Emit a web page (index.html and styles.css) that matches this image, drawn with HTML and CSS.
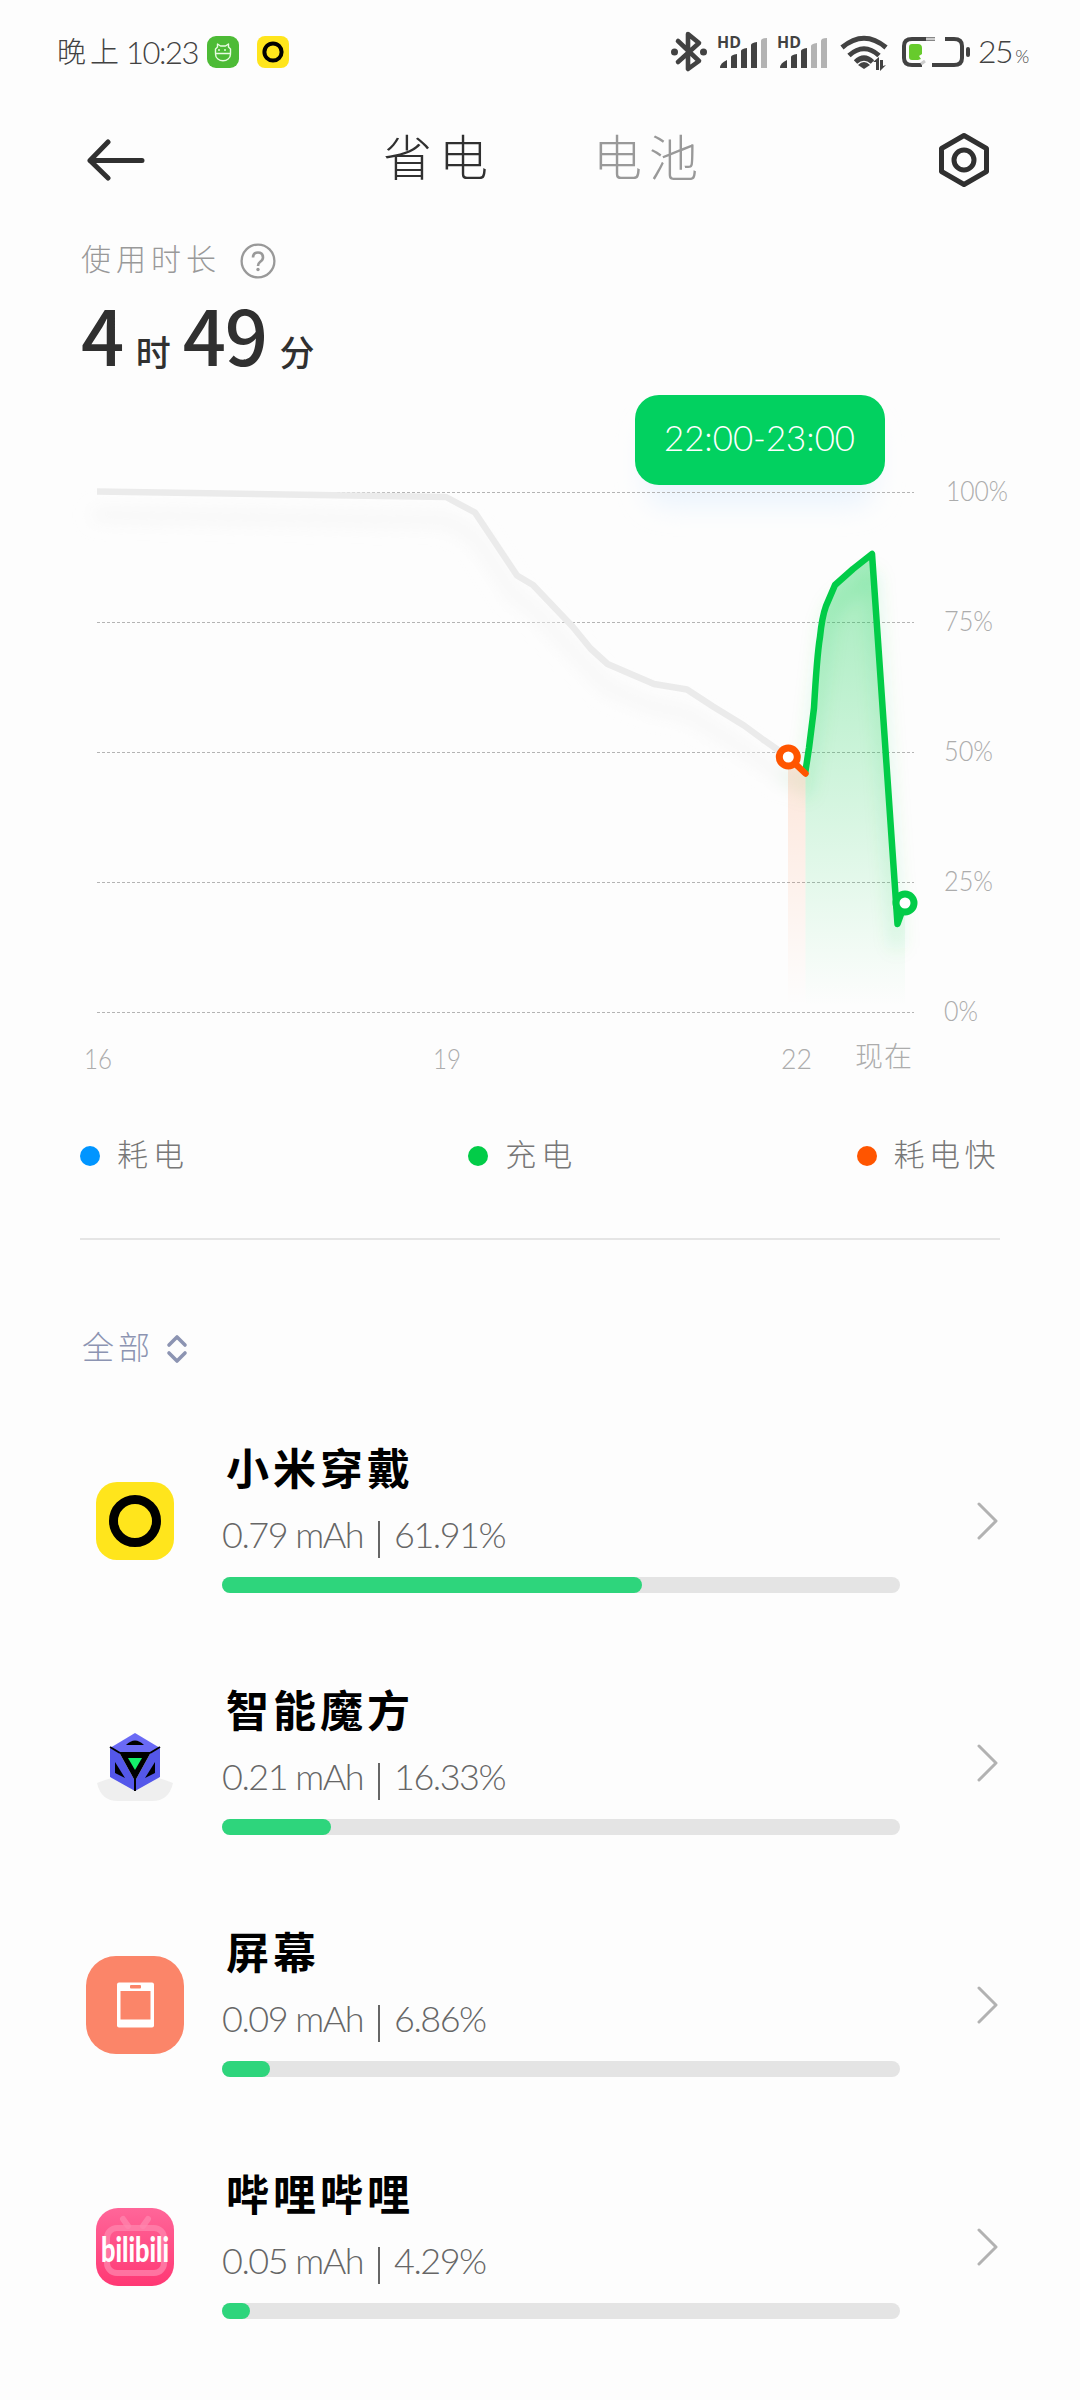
FILE: index.html
```html
<!DOCTYPE html>
<html lang="zh-CN">
<head>
<meta charset="utf-8">
<title>省电</title>
<link rel="stylesheet" href="styles.css">
</head>
<body>
<header class="status">
  <span class="clock"><span class="clock-day">晚上</span><span class="clock-time">10:23</span></span>
  <svg class="status-app" viewBox="0 0 32 32" width="32" height="32">
    <rect width="32" height="32" rx="9" fill="#4dbb36"/>
    <g fill="none" stroke="#e9fbe3" stroke-width="1.4" stroke-linejoin="round"><path d="M8.500 17.500V13l2-2V8l3 2h5l3-2v3l2 2v4.500zM8.500 18c0 9 15 9 15 0"/><path d="M12 13v2M18 13v2"/></g>
  </svg>
  <svg class="status-app" viewBox="0 0 32 32" width="32" height="32">
    <rect width="32" height="32" rx="8" fill="#ffe51c"/><circle cx="16" cy="16" r="8.600" fill="none" stroke="#000" stroke-width="4"/>
  </svg>
  <svg class="status-icons" viewBox="668 28 304 48" width="304" height="48">
    <g fill="none" stroke="#424242" stroke-width="4.600" stroke-linejoin="round" stroke-linecap="round">
      <path d="M678 41L699 61L688 69V34L699 43L678 62"/>
    </g>
    <circle cx="674.500" cy="52" r="3.500" fill="#424242"/><circle cx="703.500" cy="52" r="3.500" fill="#424242"/>
    <g fill="#424242">
      <text class="hd" x="717" y="48" textLength="24" lengthAdjust="spacingAndGlyphs">HD</text>
      <path d="M720 68q0-5 7-8v8zM731 68v-11q0-2 6-3v14zM741 68V51q0-2 6-3v20zM751 68V45q0-2 6-3v26z"/>
      <text class="hd" x="777" y="48" textLength="24" lengthAdjust="spacingAndGlyphs">HD</text>
      <path d="M780 68q0-5 7-8v8zM791 68v-11q0-2 6-3v14zM801 68V51q0-2 6-3v20z"/>
    </g>
    <path fill="#b3b3b3" d="M761 68V41q0-3 6-3v30zM811 68V46q0-2 6-3v25zM821 68V41q0-3 6-3v30z"/>
    <g fill="none" stroke="#424242" stroke-width="5">
      <path d="M842 47.500Q864 29 886 47.500M849 55.500Q864 42 879 55.500M855.500 62Q864 54 872.500 62"/>
    </g>
    <path fill="#424242" d="M858 65q6-6 12 0l-6 4zM873 62l6-5v13h-3v-8zM880 60h3v6l3-1-6 6z"/>
    <path fill="none" stroke="#424242" stroke-width="4" d="M935 39H912Q904 39 904 46V58Q904 65 912 65H922M945 39H954Q962 39 962 46V58Q962 65 954 65H932"/>
    <path stroke="#ccc" stroke-width="3" d="M926 39h9M921 64l4-3"/>
    <path fill="#67cb2c" d="M912 44h6q4 0 4 4v6l-3 2 2 3-3 1h-6q-3 0-3-3V47q0-3 3-3z"/>
    <rect x="966" y="47" width="4" height="10" rx="2" fill="#424242"/>
  </svg>
  <span class="battery">25<small>%</small></span>
</header>

<nav class="bar">
  <svg viewBox="0 0 58 42" width="58" height="42"><path fill="none" stroke="#303030" stroke-width="5" stroke-linecap="round" stroke-linejoin="round" d="M21 3L3 21.500L21 39M3 21.500H55"/></svg>
  <div class="tabs"><span class="tab tab-on">省电</span><span class="tab">电池</span></div>
  <svg class="gear" viewBox="0 0 52 56" width="52" height="56"><g fill="none" stroke="#303030" stroke-width="5" stroke-linejoin="round"><path d="M26 3.500L48.500 16.500V39.500L26 52.500L3.500 39.500V16.500z"/><circle cx="26" cy="28" r="10"/></g></svg>
</nav>

<section class="usage">
  <div class="usage-head"><span>使用时长</span>
    <svg viewBox="0 0 36 36" width="36" height="36"><g fill="none" stroke="#999" stroke-width="2.300"><circle cx="18" cy="18" r="16.400"/><path stroke-width="2.600" d="M13 14.500q0-5 5-5t5 5q0 2.500-3 4.500q-2 1.500-2 4"/></g><circle cx="18" cy="26.500" r="1.700" fill="#999"/></svg>
  </div>
  <div class="usage-time"><b>4</b><i>时</i><b>49</b><i>分</i></div>
</section>

<svg class="chart" viewBox="0 380 1080 720" width="1080" height="720">
  <defs>
    <linearGradient id="gf" gradientUnits="userSpaceOnUse" x1="0" y1="554" x2="0" y2="1006"><stop offset="0" stop-color="#02cc48" stop-opacity=".36"/><stop offset="1" stop-color="#02cc48" stop-opacity="0"/></linearGradient>
    <linearGradient id="of" gradientUnits="userSpaceOnUse" x1="0" y1="757" x2="0" y2="1006"><stop offset="0" stop-color="#ff5500" stop-opacity=".14"/><stop offset="1" stop-color="#ff5500" stop-opacity="0"/></linearGradient>
    <filter id="soft" x="-20%" y="-20%" width="140%" height="160%"><feGaussianBlur stdDeviation="9"/></filter>
    <filter id="tip" x="-20%" y="-20%" width="140%" height="170%"><feGaussianBlur stdDeviation="13"/></filter>
  </defs>
  <rect x="645" y="420" width="230" height="86" rx="24" fill="#ebf4fd" filter="url(#tip)"/>
  <g stroke="#b4b4b4" stroke-width="1" stroke-dasharray="3 2"><path d="M97 492.500H914M97 622.500H914M97 752.500H914M97 882.500H914M97 1012.500H914"/></g>
  <g fill="none" stroke-linejoin="round" stroke-linecap="round" filter="url(#soft)" stroke-width="10">
    <path stroke="#f4f4f4" d="M97 515L446 520L475 536L517 599L533 608L572 650L607 687L654 707L687 713L744 749L788 780"/>
    <path stroke="#02cc48" stroke-opacity=".16" d="M788 773L805 792L814 728L826 626L835 605L872 576L897 944"/>
  </g>
  <path fill="url(#of)" d="M788 757L805.500 773V1008H788z"/>
  <path fill="url(#gf)" d="M805.500 772L809 748L814 708L820 637L826 606L835 585L853 569L872 554L897.500 924L905 903V1008H805.500z"/>
  <g fill="none" stroke-linejoin="round" stroke-width="6.500">
    <path stroke="#ebebeb" d="M97 491.500L446 497L475 512.500L517 575.500L533 585L572.500 626.500L590.500 648.500L607.500 664L654 684L687 689.500L713 706.500L744 725.500L763 739.500L788 757"/>
    <path stroke="#02cc48" stroke-linecap="round" d="M805.500 771L809 748L814 708Q817 655 820 637Q822 617 826 606L835 585L853 569L872 554L897.500 924L905 903"/>
    <path stroke="#ff5500" stroke-linecap="round" d="M788 757L805.500 773.500"/>
  </g>
  <circle cx="788.300" cy="757" r="9" fill="#fff" stroke="#ff5500" stroke-width="7"/>
  <circle cx="905" cy="903" r="9" fill="#fff" stroke="#02cc48" stroke-width="7"/>
  <rect x="635" y="395" width="250" height="90" rx="24" fill="#02d160"/>
  <text class="tip" x="664" y="451" textLength="191" lengthAdjust="spacingAndGlyphs">22:00-23:00</text>
  <g class="axis">
    <text x="946" y="501" textLength="62" lengthAdjust="spacingAndGlyphs">100%</text>
    <text x="944" y="631" textLength="49" lengthAdjust="spacingAndGlyphs">75%</text>
    <text x="944" y="761" textLength="49" lengthAdjust="spacingAndGlyphs">50%</text>
    <text x="944" y="891" textLength="49" lengthAdjust="spacingAndGlyphs">25%</text>
    <text x="944" y="1021" textLength="34" lengthAdjust="spacingAndGlyphs">0%</text>
    <text x="84" y="1069" textLength="28" lengthAdjust="spacingAndGlyphs">16</text>
    <text x="433" y="1069" textLength="28" lengthAdjust="spacingAndGlyphs">19</text>
    <text x="781" y="1069" textLength="31" lengthAdjust="spacingAndGlyphs">22</text>
    <text x="855" y="1067" textLength="57">现在</text>
  </g>
</svg>

<div class="legend">
  <span class="key"><span class="dot dot-blue"></span><span class="key-name">耗电</span></span>
  <span class="key"><span class="dot dot-green"></span><span class="key-name">充电</span></span>
  <span class="key"><span class="dot dot-orange"></span><span class="key-name">耗电快</span></span>
</div>

<div class="filter"><span>全部</span><svg viewBox="0 0 22 30" width="22" height="30"><path fill="none" stroke="#8c94b2" stroke-width="3.600" stroke-linecap="round" stroke-linejoin="round" d="M3 11L11 3L19 11M3 19L11 27L19 19"/></svg></div>

<main class="list">
  <article class="item">
    <svg class="icon" viewBox="0 0 98 98"><rect x="10" y="10" width="78" height="78" rx="21" fill="#ffe51c"/><circle cx="49" cy="49" r="21.500" fill="none" stroke="#000" stroke-width="9"/></svg>
    <div class="info"><h2>小米穿戴</h2><p><span>0.79 mAh</span><em></em><span>61.91%</span></p><div class="track"><div class="fill" style="width:62%"></div></div></div>
    <svg class="chev" viewBox="0 0 22 38"><path d="M2 2L19 19L2 36"/></svg>
  </article>
  <article class="item">
    <svg class="icon" viewBox="0 0 98 98">
      <path fill="#efefef" d="M11 69Q30 61 49 61T87 69Q83 87 66 87H32Q15 87 11 69z"/>
      <path fill="#6a6af5" d="M49 19L74 34L65 38H33L24 34z"/>
      <path fill="#5457ea" d="M24 34L33 38L49 67V77L24 63zM74 34L65 38L49 67V77L74 63z"/>
      <path fill="#000" d="M33 38H65L49 67zM40 31Q49 22 58 31zM29 48L39 64L29 59zM69 48L59 64L69 59z"/>
      <path stroke="#000" stroke-width="2" d="M24 33L34 39M74 33L64 39M49 64V77"/>
      <path fill="#14f06b" d="M42 44H56L49 56z"/>
    </svg>
    <div class="info"><h2>智能魔方</h2><p><span>0.21 mAh</span><em></em><span>16.33%</span></p><div class="track"><div class="fill" style="width:16.1%"></div></div></div>
    <svg class="chev" viewBox="0 0 22 38"><path d="M2 2L19 19L2 36"/></svg>
  </article>
  <article class="item">
    <svg class="icon" viewBox="0 0 98 98"><rect width="98" height="98" rx="30" fill="#fb8569"/><rect x="31" y="26.500" width="37" height="45" rx="2" fill="#fff"/><rect x="34.500" y="35" width="30" height="28.500" fill="#fb8569"/><rect x="44" y="29" width="11" height="3.500" rx="1" fill="#fb8569"/></svg>
    <div class="info"><h2>屏幕</h2><p><span>0.09 mAh</span><em></em><span>6.86%</span></p><div class="track"><div class="fill" style="width:7.1%"></div></div></div>
    <svg class="chev" viewBox="0 0 22 38"><path d="M2 2L19 19L2 36"/></svg>
  </article>
  <article class="item">
    <svg class="icon" viewBox="0 0 98 98">
      <defs><linearGradient id="pk" x1="0" y1="0" x2="0" y2="1"><stop offset="0" stop-color="#ff6699"/><stop offset="1" stop-color="#ff3874"/></linearGradient></defs>
      <rect x="10" y="10" width="78" height="78" rx="22" fill="url(#pk)"/>
      <g fill="none" stroke="#ff86ad" stroke-opacity=".75" stroke-width="6" stroke-linecap="round" stroke-linejoin="round"><path d="M37 21L42 28M62 21L57 28"/><rect x="21" y="30" width="57" height="45" rx="10"/></g>
      <text class="bili" x="15" y="64" textLength="68" lengthAdjust="spacingAndGlyphs">bilibili</text>
    </svg>
    <div class="info"><h2>哔哩哔哩</h2><p><span>0.05 mAh</span><em></em><span>4.29%</span></p><div class="track"><div class="fill" style="width:4.15%"></div></div></div>
    <svg class="chev" viewBox="0 0 22 38"><path d="M2 2L19 19L2 36"/></svg>
  </article>
</main>
</body>
</html>
```
FILE: styles.css
```css
* { box-sizing: border-box; margin: 0; padding: 0; }
body {
  width: 1080px;
  height: 2400px;
  overflow: hidden;
  background: #fdfdfd;
  color: #303030;
  font-family: "Lato", "Noto Sans CJK SC", sans-serif;
  font-weight: 300;
}
svg { display: block; flex: none; }

.status { display: flex; align-items: center; height: 104px; padding-left: 57px; color: #424242; }
.clock { display: flex; width: 150px; font-size: 31px; line-height: 40px; white-space: nowrap; }
.clock-day { width: 69px; font-size: 29px; letter-spacing: 4px; }
.clock-time { letter-spacing: -1.500px; }
.status-app + .status-app { margin-left: 18px; }
.status-icons { margin-left: 379px; }
.hd { font: 700 16px "Open Sans", sans-serif; }
.battery { margin-left: 6px; margin-top: -3px; font-size: 32px; letter-spacing: -1.500px; white-space: nowrap; }
.battery small { margin-left: 3px; font-size: 18px; }

.bar { display: flex; align-items: center; height: 112px; padding: 0 90px 0 87px; }
.tabs { display: flex; flex: 1; gap: 98px; padding-left: 238px; }
.tab { font-size: 49px; line-height: 60px; letter-spacing: 7px; color: #999; margin-top: -6px; }
.tab-on { color: #303030; }

.usage { height: 164px; padding-left: 81px; }
.usage-head { display: flex; align-items: center; height: 86px; gap: 19px; color: #999; font-size: 30px; letter-spacing: 5px; }
.usage-head span { margin-top: -4px; }
.usage-head svg { margin-top: 3px; }
.usage-time { display: flex; align-items: baseline; height: 78px; line-height: 62px; white-space: nowrap; font-family: "Noto Sans CJK SC", sans-serif; }
.usage-time b { font-size: 76px; font-weight: 500; letter-spacing: -1.500px; }
.usage-time i { font-size: 35px; font-style: normal; font-weight: 500; margin: 0 12px 0 13px; }

.tip { font-size: 35px; fill: #fff; }
.axis { font-size: 28px; fill: #acacac; }

.legend { display: flex; justify-content: space-between; height: 140px; margin: 0 80px; padding-top: 34px; border-bottom: 2px solid #e5e5e5; color: #777; }
.key { display: flex; align-items: center; height: 44px; font-size: 31px; }
.key-name { letter-spacing: 5px; margin-top: -7px; margin-right: -3px; }
.key:last-child .key-name { margin-right: 0; letter-spacing: 4.500px; }
.dot { width: 20px; height: 20px; border-radius: 50%; margin-right: 17px; }
.dot-blue { background: #0095ff; }
.dot-green { background: #02cc48; }
.dot-orange { background: #ff5500; }

.filter { display: flex; align-items: center; gap: 12px; height: 60px; margin-top: 79px; padding-left: 82px; color: #8c94b2; font-size: 32px; letter-spacing: 4px; }
.filter span { margin-top: -8px; }

.list { padding-top: 21px; }
.item { display: flex; align-items: center; height: 242px; padding: 0 81px 0 86px; }
.icon { width: 98px; height: 98px; }
.info { width: 678px; margin-left: 38px; margin-top: -10px; padding-top: 2px; }
.info h2 { font-size: 43px; line-height: 56px; font-weight: 700; letter-spacing: 4px; color: #000; margin-bottom: 4px; padding-left: 4px; }
.info p { display: flex; align-items: center; height: 76px; padding-bottom: 10px; font-size: 36px; letter-spacing: -1.500px; color: #666; white-space: nowrap; }
.info em { width: 2px; height: 37px; margin: 10px 14px 0 15px; background: #666; }
.track { height: 16px; border-radius: 8px; background: #e4e4e4; }
.fill { height: 16px; border-radius: 8px; background: #2ed57c; }
.chev { width: 22px; height: 38px; margin-left: auto; fill: none; stroke: #b2b2b2; stroke-width: 3; stroke-linecap: round; stroke-linejoin: round; }
.bili { font: 900 35px "Lato", sans-serif; fill: #fff; }
```
